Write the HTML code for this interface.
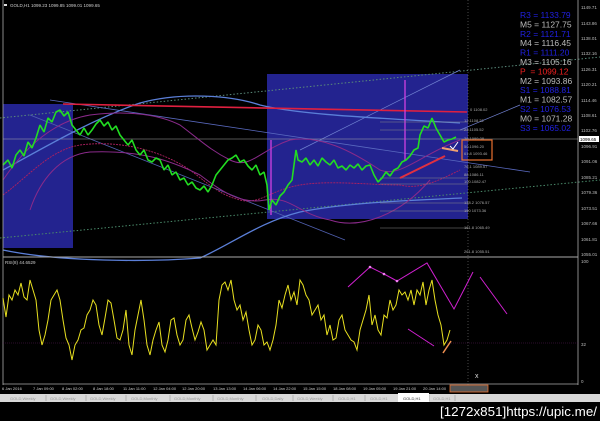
<!DOCTYPE html>
<html><head><style>
html,body{margin:0;padding:0;background:#000;width:600px;height:421px;overflow:hidden}
svg{display:block}
text{font-family:"Liberation Sans",sans-serif}
</style></head><body>
<svg width="600" height="421" viewBox="0 0 600 421" xmlns="http://www.w3.org/2000/svg">
<rect width="600" height="421" fill="#000"/>
<rect x="3" y="104" width="70" height="144" fill="#23238f"/>
<rect x="267" y="74" width="201" height="145" fill="#23238f"/>
<line x1="0" y1="118" x2="600" y2="57" stroke="#5a8a7a" stroke-width="1" stroke-dasharray="1.5,2"/>
<line x1="0" y1="238" x2="600" y2="180" stroke="#4a8a6a" stroke-width="1" stroke-dasharray="1.5,2"/>
<line x1="468" y1="0" x2="468" y2="385" stroke="#777" stroke-width="0.6" stroke-dasharray="1,2"/>
<line x1="50" y1="100" x2="530" y2="172" stroke="#5a6ac0" stroke-width="0.8"/>
<line x1="30" y1="115" x2="345" y2="240" stroke="#5060b0" stroke-width="0.8"/>
<line x1="300" y1="150" x2="460" y2="70" stroke="#7080d0" stroke-width="0.7"/>
<line x1="460" y1="130" x2="520" y2="105" stroke="#7080d0" stroke-width="0.7"/>
<line x1="3" y1="139" x2="578" y2="139" stroke="#aaa" stroke-width="0.6"/>
<path d="M3,170 C40,150 90,120 140,103 C180,92 230,95 260,105 C300,115 380,118 460,123" fill="none" stroke="#5b7fd8" stroke-width="1.3"/>
<path d="M3,250 C60,262 150,262 200,258 C230,245 260,222 300,212 C350,202 420,200 462,198" fill="none" stroke="#5b7fd8" stroke-width="1.3"/>
<path d="M3,180 C30,140 60,120 90,115 C130,110 160,115 180,125 C200,140 210,150 230,160 C250,170 260,150 290,140 C320,135 350,150 380,170 C400,178 420,155 460,140" fill="none" stroke="#8a2a8a" stroke-width="1"/>
<path d="M3,195 C30,175 50,150 80,145 C120,140 160,150 190,170 C210,185 220,195 240,200 C260,205 270,190 300,185 C330,180 370,185 400,185 C420,190 440,180 460,170" fill="none" stroke="#b02060" stroke-width="0.9" stroke-dasharray="2,1"/>
<path d="M30,210 C40,180 60,155 90,152 C140,150 170,160 200,175 C220,190 240,205 265,200 C290,195 300,215 330,220 C360,230 400,215 430,180" fill="none" stroke="#8a2a8a" stroke-width="1"/>
<line x1="63" y1="104" x2="467" y2="112" stroke="#e02040" stroke-width="1.6"/>
<line x1="271" y1="140" x2="271" y2="215" stroke="#d040e0" stroke-width="1.3"/>
<line x1="405" y1="80" x2="405" y2="160" stroke="#d040e0" stroke-width="1.3"/>
<g stroke="#888" stroke-width="0.5">
<line x1="380" y1="122" x2="468" y2="122"/><line x1="380" y1="130" x2="468" y2="130"/>
<line x1="380" y1="178" x2="468" y2="178"/><line x1="380" y1="184" x2="468" y2="184"/>
<line x1="380" y1="203" x2="468" y2="203"/><line x1="380" y1="211" x2="468" y2="211"/>
<line x1="380" y1="228" x2="468" y2="228"/>
</g>
<g font-size="4" fill="#aaa">
<text x="470" y="111">0  1108.02</text><text x="464" y="122">12.1108.22</text><text x="464" y="131">23.1105.52</text><text x="464" y="140">38.1099.08</text>
<text x="464" y="148">50.1096.20</text><text x="464" y="155">61.8 1093.46</text><text x="464" y="168">76.1 1089.57</text><text x="464" y="176">88.1086.11</text>
<text x="464" y="183">100.1082.47</text><text x="464" y="204">138.2 1076.57</text><text x="464" y="212">150 1073.36</text><text x="464" y="229">161.8 1065.49</text>
<text x="464" y="253">261.8 1055.51</text>
</g>
<polyline fill="none" stroke="#22dd22" stroke-width="1.6" stroke-linejoin="bevel" points="3,165 8,160 12,168 16,155 20,150 24,156 28,142 32,148 36,138 40,125 44,132 48,118 52,122 56,112 60,110 64,116 68,112 72,125 76,130 80,135 84,128 88,135 92,130 96,124 100,120 104,126 108,122 112,130 116,126 120,135 124,140 128,145 132,140 136,150 140,155 144,150 148,160 152,162 156,158 160,160 164,170 168,165 172,175 176,172 180,180 184,178 188,185 192,182 196,188 200,190 204,186 208,192 212,185 216,175 220,170 224,165 228,160 232,158 236,155 240,162 244,160 248,166 252,170 256,165 260,175 264,172 267,185 269,210 272,200 276,205 280,196 284,192 288,185 292,180 296,150 298,160 302,162 306,158 310,165 314,160 318,166 322,158 326,162 330,165 334,160 338,168 342,166 346,170 350,165 354,168 358,164 362,170 366,166 370,165 374,175 378,182 382,178 386,172 390,176 394,170 398,168 402,162 406,160 410,156 414,150 418,148 420,135 424,126 428,128 432,118 436,128 440,135 444,142 448,140 452,139 456,137"/>
<line x1="400" y1="178" x2="445" y2="156" stroke="#e03040" stroke-width="2"/>
<line x1="442" y1="148" x2="458" y2="151" stroke="#f0a070" stroke-width="2"/>
<path d="M450,146 l3,3 l5,-7" stroke="#fff" fill="none" stroke-width="1"/>
<rect x="462" y="140" width="30" height="20" fill="none" stroke="#e87030" stroke-width="1.2"/>
<g font-size="8.5">
<text x="520" y="18" fill="#2020e0">R3 = 1133.79</text>
<text x="520" y="27.4" fill="#bbb">M5 = 1127.75</text>
<text x="520" y="36.8" fill="#2020e0">R2 = 1121.71</text>
<text x="520" y="46.2" fill="#bbb">M4 = 1116.45</text>
<text x="520" y="55.6" fill="#2020e0">R1 = 1111.20</text>
<text x="520" y="65" fill="#bbb">M3 = 1105.16</text>
<text x="520" y="74.4" fill="#f02020">P&#160;&#160;= 1099.12</text>
<text x="520" y="83.8" fill="#bbb">M2 = 1093.86</text>
<text x="520" y="93.2" fill="#2020e0">S1 = 1088.81</text>
<text x="520" y="102.6" fill="#bbb">M1 = 1082.57</text>
<text x="520" y="112" fill="#2020e0">S2 = 1076.53</text>
<text x="520" y="121.4" fill="#bbb">M0 = 1071.28</text>
<text x="520" y="130.8" fill="#2020e0">S3 = 1065.02</text>
</g>
<rect x="4" y="4" width="3" height="2" fill="#ddd"/>
<text x="10" y="7" font-size="4.5" fill="#ccc">GOLD,H1  1099.23 1099.85 1099.01 1099.65</text>
<line x1="3" y1="0" x2="3" y2="385" stroke="#aaa" stroke-width="0.8"/>
<line x1="578" y1="0" x2="578" y2="385" stroke="#aaa" stroke-width="0.8"/>
<line x1="3" y1="257" x2="578" y2="257" stroke="#aaa" stroke-width="1"/>
<line x1="3" y1="384" x2="578" y2="384" stroke="#aaa" stroke-width="0.8"/>
<g font-size="4.5" fill="#bbb">
<text x="581" y="9">1149.71</text><text x="581" y="25">1143.86</text><text x="581" y="40">1138.01</text><text x="581" y="55">1132.16</text>
<text x="581" y="71">1126.31</text><text x="581" y="86">1120.21</text><text x="581" y="102">1114.46</text><text x="581" y="117">1108.61</text>
<text x="581" y="132">1102.76</text><text x="581" y="148">1096.91</text><text x="581" y="163">1091.06</text><text x="581" y="179">1085.21</text>
<text x="581" y="194">1079.36</text><text x="581" y="210">1073.51</text><text x="581" y="225">1067.66</text><text x="581" y="241">1061.81</text>
<text x="581" y="256">1055.01</text>
<text x="581" y="263">100</text><text x="581" y="346">32</text><text x="581" y="383">0</text>
</g>
<rect x="579" y="136" width="20" height="6" fill="#fff"/>
<text x="580" y="141" font-size="4.5" fill="#000">1099.65</text>
<text x="5" y="264" font-size="4.5" fill="#ccc">RSI(8) 44.6529</text>
<line x1="3" y1="343" x2="578" y2="343" stroke="#5a1a5a" stroke-width="0.6" stroke-dasharray="1,1"/>
<polyline fill="none" stroke="#e8e020" stroke-width="1" points="3,298 6,317 9,295 12,300 15,290 18,295 21,283 24,297 27,300 30,280 33,290 36,300 39,330 42,345 45,335 48,320 51,300 54,295 57,290 60,300 63,320 66,338 69,345 72,360 75,345 78,340 81,330 84,328 87,315 90,310 93,300 96,305 99,325 102,335 105,318 108,300 111,303 114,320 117,338 120,340 123,330 126,310 129,345 132,355 135,330 138,315 141,300 144,320 147,345 150,355 153,340 156,330 159,322 162,345 165,352 168,340 171,320 174,318 177,335 180,345 183,340 186,320 189,315 192,328 195,340 198,332 201,322 204,330 207,350 210,345 213,340 216,345 219,300 222,285 225,282 228,290 231,280 234,300 237,310 240,305 243,320 246,312 249,330 252,345 255,340 258,325 261,330 264,345 267,342 270,350 273,340 276,325 279,300 282,308 285,295 288,285 291,300 294,292 297,305 300,280 303,285 306,295 309,300 312,315 315,310 318,305 321,320 324,315 327,335 330,325 333,340 336,338 339,320 342,315 345,330 348,335 351,340 354,342 357,350 360,330 363,320 366,310 369,295 372,325 375,315 378,330 381,335 384,315 387,318 390,300 393,310 396,305 399,290 402,295 405,292 408,300 411,290 414,305 417,290 420,295 423,282 426,305 429,290 432,280 435,300 438,315 441,325 444,345 447,340 450,330"/>
<g fill="none" stroke="#d020d0" stroke-width="1">
<polyline points="348,287 370,267 384,274 397,281 427,263 454,309 473,272"/>
<line x1="480" y1="277" x2="507" y2="314"/>
<line x1="408" y1="329" x2="434" y2="346"/>
</g>
<circle cx="370" cy="267" r="1.3" fill="#f080f0"/><circle cx="384" cy="274" r="1.3" fill="#f080f0"/><circle cx="397" cy="281" r="1.3" fill="#f080f0"/>
<line x1="443" y1="353" x2="451" y2="341" stroke="#f09050" stroke-width="1.5"/>
<text x="475" y="378" font-size="7" fill="#ddd">x</text>
<g font-size="4" fill="#ccc">
<text x="2" y="390">6 Jan 2016</text><text x="33" y="390">7 Jan 09:00</text><text x="62" y="390">8 Jan 02:00</text><text x="93" y="390">8 Jan 18:00</text>
<text x="123" y="390">11 Jan 11:00</text><text x="153" y="390">12 Jan 04:00</text><text x="182" y="390">12 Jan 20:00</text><text x="213" y="390">13 Jan 13:00</text>
<text x="243" y="390">14 Jan 06:00</text><text x="273" y="390">14 Jan 22:00</text><text x="303" y="390">15 Jan 15:00</text><text x="333" y="390">18 Jan 08:00</text>
<text x="363" y="390">19 Jan 05:00</text><text x="393" y="390">19 Jan 21:00</text><text x="423" y="390">20 Jan 14:00</text>
</g>
<rect x="450" y="385" width="38" height="7" fill="#555" stroke="#e87030" stroke-width="0.8"/>
<rect x="0" y="394" width="600" height="8" fill="#d8d8d8"/>
<g stroke="#999" stroke-width="0.6">
<line x1="46" y1="395" x2="46" y2="401"/><line x1="86" y1="395" x2="86" y2="401"/><line x1="126" y1="395" x2="126" y2="401"/>
<line x1="170" y1="395" x2="170" y2="401"/><line x1="213" y1="395" x2="213" y2="401"/><line x1="256" y1="395" x2="256" y2="401"/>
<line x1="293" y1="395" x2="293" y2="401"/><line x1="333" y1="395" x2="333" y2="401"/><line x1="365" y1="395" x2="365" y2="401"/>
<line x1="429" y1="395" x2="429" y2="401"/><line x1="455" y1="395" x2="455" y2="401"/>
</g>
<rect x="398" y="393" width="31" height="9" fill="#fff"/>
<g font-size="4" fill="#999">
<text x="10" y="400">GOLD,Weekly</text><text x="50" y="400">GOLD,Weekly</text><text x="90" y="400">GOLD,Weekly</text><text x="131" y="400">GOLD,Monthly</text>
<text x="174" y="400">GOLD,Monthly</text><text x="217" y="400">GOLD,Monthly</text><text x="262" y="400">GOLD,Daily</text><text x="297" y="400">GOLD,Weekly</text>
<text x="338" y="400">GOLD,H1</text><text x="370" y="400">GOLD,H1</text><text x="403" y="400" fill="#333">GOLD,H1</text><text x="433" y="400">GOLD,H1</text>
</g>
<text x="440" y="416" font-size="12.5" fill="#fff" textLength="157" lengthAdjust="spacingAndGlyphs">[1272x851]https://upic.me/</text>
</svg>
</body></html>
